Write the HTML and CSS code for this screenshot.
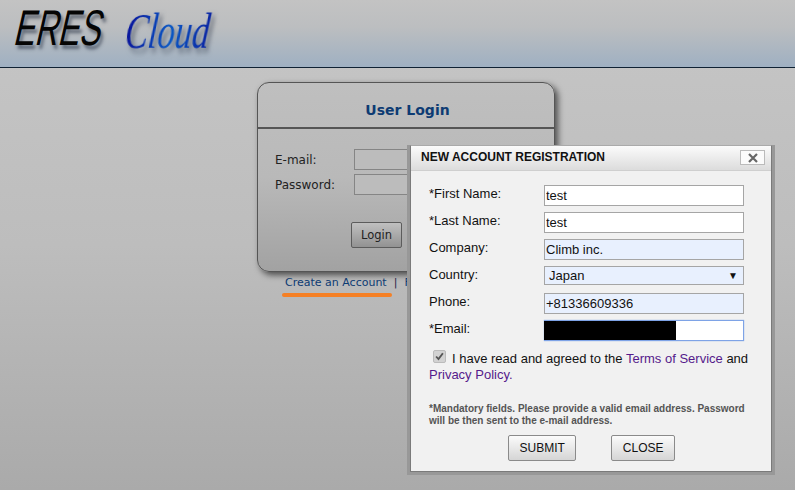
FILE: index.html
```html
<!DOCTYPE html>
<html lang="en">
<head>
<meta charset="utf-8">
<title>ERES Cloud</title>
<link rel="stylesheet" href="styles.css">
</head>
<body>
<header class="topbar">
  <div class="logo"><span class="logo-eres">ERES</span><span class="logo-cloud">Cloud</span></div>
</header>
<main class="stage">
  <section class="login-card">
    <h1 class="login-title">User Login</h1>
    <div class="login-body">
      <div class="login-row"><label class="login-label">E-mail:</label><input class="login-input" type="text"></div>
      <div class="login-row"><label class="login-label">Password:</label><input class="login-input" type="password"></div>
      <div class="login-actions"><button class="login-btn" type="button">Login</button></div>
    </div>
  </section>
  <nav class="login-links">
    <a class="login-link link-create" href="#">Create an Account</a><span class="login-sep">|</span><a class="login-link" href="#">F</a>
  </nav>
</main>
<section class="modal">
  <div class="modal-head">
    <span class="modal-title">NEW ACCOUNT REGISTRATION</span>
    <button class="modal-x" type="button" aria-label="Close">
      <svg class="modal-x-icon" viewBox="0 0 10 10" width="10" height="10"><path d="M1 1L9 9M9 1L1 9" fill="none" stroke="#666" stroke-width="2.2"/></svg>
    </button>
  </div>
  <div class="modal-body">
    <form class="reg-grid">
      <label class="reg-label">*First Name:</label><input class="reg-input" type="text" value="test">
      <label class="reg-label">*Last Name:</label><input class="reg-input" type="text" value="test">
      <label class="reg-label">Company:</label><input class="reg-input reg-auto" type="text" value="Climb inc.">
      <label class="reg-label">Country:</label>
      <div class="reg-select"><span>Japan</span><span class="reg-arrow">▼</span></div>
      <label class="reg-label">Phone:</label><input class="reg-input reg-auto" type="text" value="+81336609336">
      <label class="reg-label">*Email:</label>
      <div class="reg-email"><input class="reg-input reg-focus" type="text"><span class="redaction"></span></div>
    </form>
    <p class="agree">
      <span class="agree-box"><svg viewBox="0 0 13 13" width="13" height="13"><path d="M2.5 6.5L5.3 9.6L10.5 2.6" fill="none" stroke="#555" stroke-width="2.2"/></svg></span>I have read and agreed to the <a class="agree-link" href="#">Terms of Service</a> and <a class="agree-link" href="#">Privacy Policy.</a>
    </p>
    <p class="mandatory">*Mandatory fields. Please provide a valid email address. Password will be then sent to the e-mail address.</p>
    <div class="modal-actions">
      <button class="modal-btn" type="button">SUBMIT</button>
      <button class="modal-btn" type="button">CLOSE</button>
    </div>
  </div>
</section>
</body>
</html>
```
FILE: styles.css
```css
* { box-sizing: border-box; }
html, body { margin: 0; height: 100%; }
body {
  width: 795px;
  height: 490px;
  overflow: hidden;
  background: linear-gradient(#c6c6c6 0%, #bdbdbd 50%, #aaaaaa 100%);
  font-family: "Liberation Sans", Arial, sans-serif;
  color: #000;
  position: relative;
}
.topbar {
  height: 68px;
  border-bottom: 1px solid #0f2133;
  background: linear-gradient(#c3c3c3 0%, #bcbec0 40%, #9fb0c2 100%);
  padding: 0 0 0 15px;
  display: flex;
}
.logo {
  display: flex;
  align-items: flex-start;
  height: 60px;
}
.logo-eres {
  display: inline-block;
  width: 113px;
  font-family: "Liberation Sans", sans-serif;
  font-size: 50px;
  line-height: 56px;
  color: #050505;
  transform: skewX(-13deg) scaleX(.64);
  transform-origin: left bottom;
  text-shadow: 5px 4px 4px rgba(30,40,60,.55);
  margin-left: -5px;
}
.logo-cloud {
  display: inline-block;
  margin-top: 6px;
  padding-right: 8px;
  font-family: "Liberation Serif", serif;
  font-style: italic;
  font-size: 50px;
  line-height: 50px;
  background: linear-gradient(90deg, #08129a 0%, #0a58c4 50%, #0b1e9e 100%);
  -webkit-background-clip: text;
  background-clip: text;
  color: transparent;
  transform: skewX(-6deg) scaleX(.69);
  transform-origin: left bottom;
  filter: drop-shadow(5px 4px 3px rgba(30,40,60,.55));
}
.stage {
  padding: 14px 0 0 257px;
}
.login-card {
  width: 298px;
  height: 190px;
  border: 1px solid #555;
  border-radius: 12px;
  background: linear-gradient(#bfbfbf 0%, #b9b9b9 50%, #a2a2a2 100%);
  box-shadow: 3px 3px 6px rgba(0,0,0,.6);
  font-family: "DejaVu Sans", Verdana, sans-serif;
}
.login-title {
  margin: 0;
  height: 46px;
  padding: 18px 0 0 3px;
  border-bottom: 2px solid #555;
  text-align: center;
  color: #0d3b73;
  font-size: 14px;
  line-height: 18px;
  font-weight: bold;
}
.login-body { padding: 18px 16px 0 17px; }
.login-row {
  display: flex;
  align-items: center;
  height: 25px;
}
.login-label { width: 79px; font-size: 12px; color: #222; }
.login-input {
  width: 150px;
  height: 21px;
  border: 1px solid #858585;
  background: #bcbcbc;
}
.login-actions { padding: 25px 0 0 76px; }
.login-btn {
  width: 51px;
  height: 26px;
  border: 1px solid #5c5c5c;
  border-radius: 2px;
  background: linear-gradient(#c0c0c0, #929292);
  font-family: "DejaVu Sans", Verdana, sans-serif;
  font-size: 11.5px;
  color: #222;
  padding: 0;
}
.login-links {
  display: flex;
  padding: 4px 0 0 28px;
  font-family: "DejaVu Sans", Verdana, sans-serif;
  font-size: 11px;
  line-height: 14px;
  white-space: nowrap;
}
.login-link { color: #0d3b73; text-decoration: none; }
.link-create {
  position: relative;
}
.link-create::after {
  content: "";
  position: absolute;
  left: -3px;
  right: -5px;
  top: 17px;
  height: 4px;
  border-radius: 2px;
  background: #f58025;
}
.login-sep { margin: 0 7px; color: #2a1f4a; }
.modal {
  position: absolute;
  left: 410px;
  top: 145px;
  width: 362px;
  height: 327px;
  border: 1px solid #7a7a7a;
  border-top-color: #aaa;
  background: #f1f1f1;
  box-shadow: -3px 0 0 #989898, 3px 0 0 #989898, 0 3px 0 #989898, 3px 3px 0 #989898, -3px 3px 0 #989898;
}
.modal-head {
  height: 25px;
  border-bottom: 1px solid #cfcfcf;
  background: linear-gradient(#fbfbfb, #dcdcdc);
  display: flex;
  justify-content: space-between;
  align-items: center;
  padding: 0 6px 3px 10px;
}
.modal-title { font-size: 12px; font-weight: bold; color: #111; }
.modal-x {
  width: 25px;
  height: 15px;
  padding: 0;
  margin-top: 2px;
  border: 1px solid #bbb;
  background: #fbfbfb;
  display: flex;
  align-items: center;
  justify-content: center;
}
.modal-x-icon { display: block; }
.modal-body { padding: 14px 27px 0 18px; }
.reg-grid {
  display: grid;
  grid-template-columns: 115px 200px;
  grid-auto-rows: 21px;
  row-gap: 6px;
}
.reg-label {
  padding-top: 1px;
  font-size: 13px;
  line-height: 15px;
  color: #111;
}
.reg-input {
  width: 200px;
  height: 21px;
  border: 1px solid #a5a5a5;
  background: #fff;
  padding: 0 1px;
  font-family: "Liberation Sans", Arial, sans-serif;
  font-size: 13px;
  color: #111;
  outline: none;
}
.reg-auto { background: #e8f0fe; }
.reg-select {
  width: 200px;
  height: 19px;
  border: 1px solid #a5a5a5;
  background: #e8f0fe;
  padding: 0 5px 0 4px;
  font-size: 13px;
  line-height: 17px;
  display: flex;
  justify-content: space-between;
  color: #111;
}
.reg-arrow { font-size: 10px; }
.reg-email { position: relative; width: 200px; height: 21px; }
.reg-focus { border: 1px solid #7ea3e6; box-shadow: 0 0 1px #7ea3e6; }
.redaction {
  position: absolute;
  left: 0;
  top: 1px;
  width: 132px;
  height: 19px;
  background: #000;
}
.agree {
  margin: 9px 0 0;
  width: 325px;
  font-size: 13px;
  line-height: 16px;
  color: #111;
}
.agree-box {
  display: inline-flex;
  width: 13px;
  height: 13px;
  margin: 0 6px 0 4px;
  border-radius: 2px;
  background: #d2d2d2;
  border: 1px solid #bbb;
  vertical-align: 0;
  align-items: center;
  justify-content: center;
}
.agree-link { color: #551a8b; text-decoration: none; }
.mandatory {
  margin: 20px 0 0;
  width: 320px;
  font-size: 10px;
  line-height: 12px;
  font-weight: bold;
  color: #555;
}
.modal-actions {
  display: flex;
  gap: 35px;
  padding: 8px 0 0 79px;
}
.modal-btn {
  height: 26px;
  padding: 0 10.5px;
  border: 1px solid #8a8a8a;
  border-radius: 2px;
  background: linear-gradient(#fbfbfb, #d5d5d5);
  font-family: "Liberation Sans", Arial, sans-serif;
  font-size: 12px;
  color: #111;
}
```
